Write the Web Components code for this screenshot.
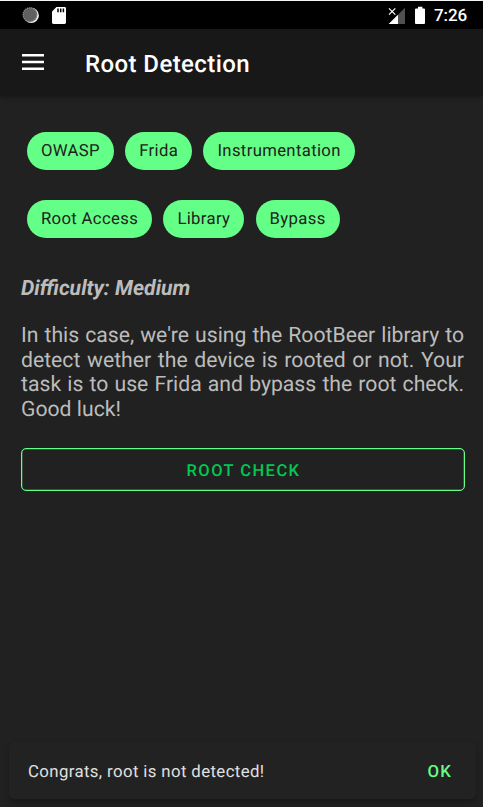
<!DOCTYPE html>
<html lang="en"><head><meta charset="utf-8"><title>Root Detection</title>
<style>html,body{margin:0;height:100%;background:#212121}body{overflow:hidden}</style></head>
<body>
<root-screen></root-screen>
<script>
const define = (name, markup) => customElements.define(name, class extends HTMLElement {
  constructor() {
    super();
    this.attachShadow({ mode: 'open' }).innerHTML = markup;
  }
});

define('status-bar', `<style>
:host{display:flex;box-sizing:border-box;height:29px;background:#000;border-top:1px solid #f4f4f4;color:#fff}
svg{flex:1;display:block;height:28px}
time{font:500 17px/31px Roboto,sans-serif;width:49px;letter-spacing:-.1px}
</style>
<svg viewBox="0 1 434 28" preserveAspectRatio="xMinYMin meet">
<circle cx="31.2" cy="15.4" r="7.7" fill="#eee"/>
<circle cx="30" cy="14.7" r="7.2" fill="#606060"/>
<circle cx="30" cy="14.7" r="6.9" fill="none" stroke="#909090" stroke-width="1.3" stroke-dasharray="1 1.1"/>
<path fill="#fff" d="M56.5 7H64.6q1.4 0 1.4 1.4V22.6q0 1.4-1.4 1.4H53.4q-1.4 0-1.4-1.4V11.5z"/>
<path d="M58 8.5v3.7M60.7 8.5v3.7M63.4 8.5v3.7" stroke="#000" stroke-width="1.5"/>
<path d="M405 7.7V24H388.7z" fill="#505050"/><path d="M398 14.7V24h-9.3z" fill="#fff"/>
<path d="M389 8.3l6.3 6.3M395.3 8.3L389 14.6" stroke="#fff" stroke-width="1.2"/>
<path d="M418 6.8h4.4v1.7H424q1 0 1 1V23q0 1-1 1h-8q-1 0-1-1V9.5q0-1 1-1h2z" fill="#fff"/>
</svg><time>7:26</time>`);

define('app-bar', `<style>
:host{display:flex;align-items:center;box-sizing:border-box;height:67px;padding-left:22px;gap:41px;background:#181818;box-shadow:0 1px 4px #0005;position:relative}
h1{margin:2px 0 0;color:#fff;font:500 24px/30px Roboto,sans-serif;letter-spacing:.41px}
svg{display:block;margin-top:-1px}
</style>
<svg width="22" height="16" viewBox="0 0 22 16" fill="#fff"><path d="M0 0h22v2.4H0zM0 6.8h22v2.4H0zM0 13.6h22v2.4H0z"/></svg>
<h1><slot></slot></h1>`);

define('tag-chip', `<style>
:host{display:block;box-sizing:border-box;height:38px;padding:0 14px;border-radius:19px;background:#64ff86;color:#212121;font:400 16.7px/39px Roboto,sans-serif;letter-spacing:.34px;white-space:nowrap}
</style><slot></slot>`);

define('chip-row', `<style>:host{display:flex;gap:11.3px;padding-left:6px}</style><slot></slot>`);

define('outlined-button', `<style>
:host{display:block}
button{display:block;box-sizing:border-box;width:100%;height:43px;padding:2px 0 0 1px;border:1px solid #64ff86;box-shadow:inset 0 0 0 .5px #64ff8680;border-radius:5px;background:none;color:#00c853;font:500 16.5px/41px Roboto,sans-serif;letter-spacing:1.45px;text-transform:uppercase;text-rendering:inherit}
</style><button><slot></slot></button>`);

define('snack-bar', `<style>
:host{display:flex;align-items:center;justify-content:space-between;box-sizing:border-box;height:57px;margin:0 7px 8px 9px;padding:3px 24px 0 19px;border-radius:5px;background:#222;box-shadow:0 4px 6px #0004;color:#e0e0e0;font:400 16.8px/24px Roboto,sans-serif;letter-spacing:.38px}
b{color:#64ff86;font-weight:500;letter-spacing:1.2px}
</style><span><slot></slot></span><b><slot name="action"></slot></b>`);

define('root-screen', `<style>
:host{display:flex;flex-direction:column;width:483px;height:807px;background:#212121;overflow:hidden;font-family:Roboto,sans-serif;text-rendering:geometricPrecision}
main{flex:1;padding:36px 18px 0 21px}
chip-row+chip-row{margin-top:30px}
h2{margin:38px 0 0;color:#bcbcbc;font:italic 700 21.2px/25px Roboto,sans-serif}
p{margin:22.8px 1px 0 0;color:#bcbcbc;font-size:21.2px;line-height:24.75px;text-align:justify}
outlined-button{margin-top:25.2px}
</style>
<status-bar></status-bar>
<app-bar>Root Detection</app-bar>
<main>
<chip-row><tag-chip>OWASP</tag-chip><tag-chip>Frida</tag-chip><tag-chip>Instrumentation</tag-chip></chip-row>
<chip-row><tag-chip>Root Access</tag-chip><tag-chip>Library</tag-chip><tag-chip>Bypass</tag-chip></chip-row>
<h2>Difficulty: Medium</h2>
<p>In this case, we're using the RootBeer library to detect wether the device is rooted or not. Your task is to use Frida and bypass the root check. Good luck!</p>
<outlined-button>Root check</outlined-button>
</main>
<snack-bar>Congrats, root is not detected!<span slot="action">OK</span></snack-bar>`);
</script>
</body></html>
